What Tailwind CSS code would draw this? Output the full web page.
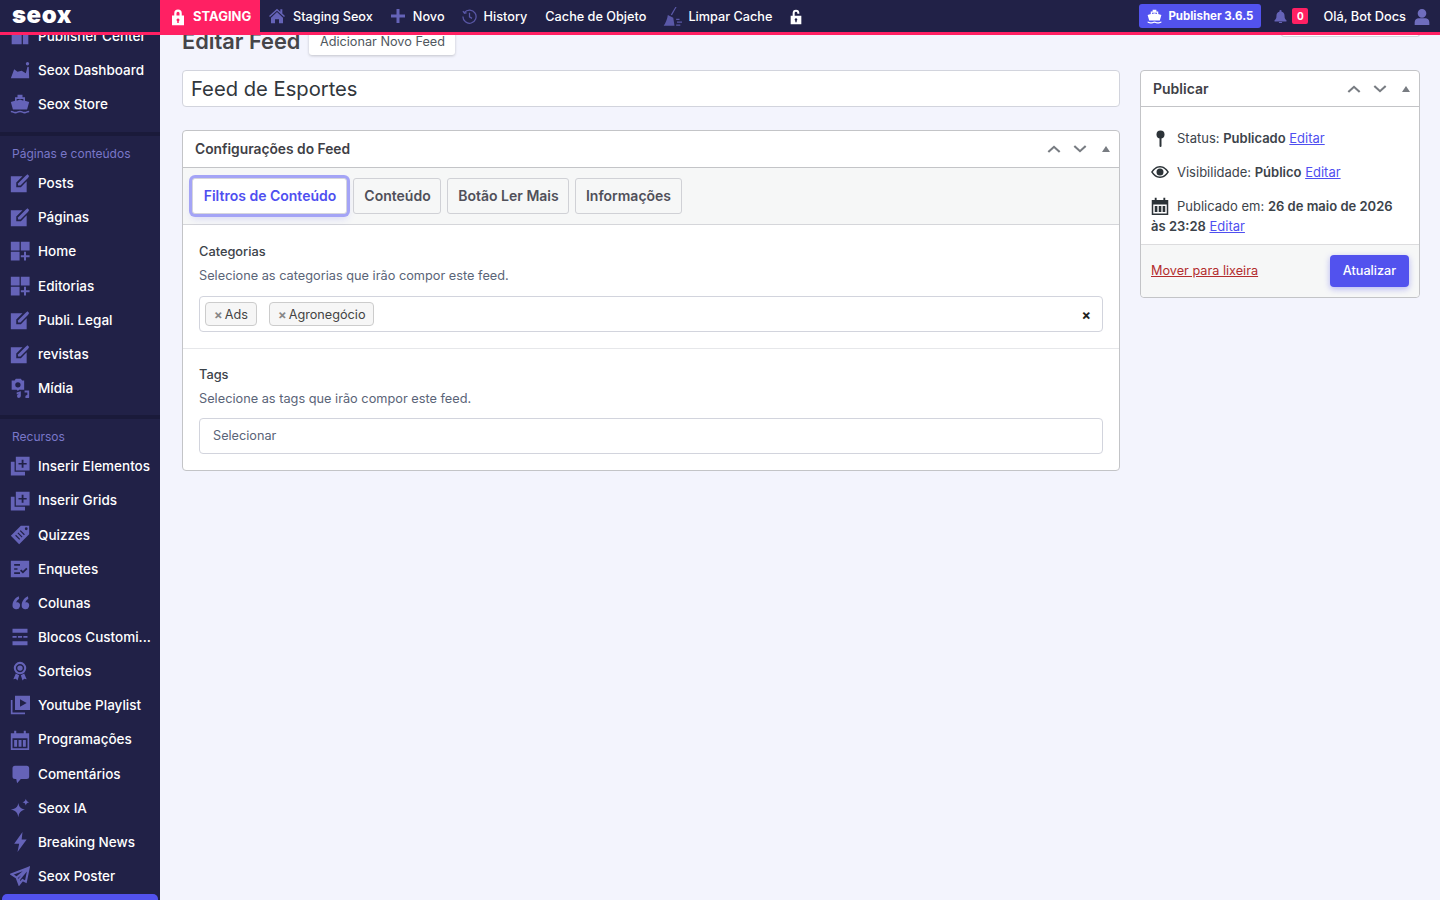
<!DOCTYPE html>
<html lang="pt-BR">
  <head>
    <meta charset="UTF-8" />
    <title>Editar Feed</title>
    <script src="https://cdn.jsdelivr.net/npm/@tailwindcss/browser@4"></script>
  </head>
  <body class="h-[900px] w-[1440px] overflow-hidden bg-[#f3f4fd] font-['Inter',sans-serif] text-[#3c434a]">
    <!-- shared icons -->
    <svg class="hidden">
      <symbol id="i-edit" viewBox="0 0 24 24"><path d="M1 4h14L7.500 11.500V17H13l7-7v13H1z"/><path d="M9.500 12.500 18.500 3.500l2.500-2 2 2-1.500 2.500-9 9H9.500z"/></symbol>
      <symbol id="i-grid" viewBox="0 0 24 24"><path d="M1 1h10.500v10.500H1zM13 1h10.500v10.500H13zM1 13h10.500v10.500H1zM16.800 13h2.400v4H23.500v2.400h-4.300v4.100h-2.400v-4.100H13V17h3.800z"/></symbol>
      <symbol id="i-media" viewBox="0 0 24 24"><path d="M2 3h3.500l1.500-2h6l1.500 2H17v11H11l-1.500 1.500L8 14H2zM9.500 5a3.200 3.200 0 1 0 0 6.400 3.200 3.200 0 0 0 0-6.400z" fill-rule="evenodd"/><path d="M17.500 15H23v7.500a2.300 2.300 0 1 1-2.200-2.200V17.500h-3.300zM8 17.500l5-1.500v5.500a2.300 2.300 0 1 1-2.200-2.200v-.5l-2.800.8z"/></symbol>
      <symbol id="i-insert" viewBox="0 0 24 24"><path d="M1 7h4.500v12H18v4.500H1z"/><path fill-rule="evenodd" d="M7 1h16.500v16.500H7zm7 3.500v3.800h-3.800v2H14V14h2.200v-3.700H20v-2h-3.800V4.500z"/></symbol>
      <symbol id="i-lock" viewBox="0 0 24 24"><path fill-rule="evenodd" d="M7 10V7a5 5 0 0 1 10 0v3h3v13H4V10zm3 0h4V7a2 2 0 0 0-4 0zm2 4a2 2 0 0 0-1 3.700V20h2v-2.300A2 2 0 0 0 12 14z"/></symbol>
      <symbol id="i-ship" viewBox="0 0 24 24"><path d="M9 1h6v3h3v4l5 1.500-2.500 9H3.500L1 9.500 6 8V4h3zM8 6v2l4-1.300L16 8V6z" fill-rule="evenodd"/><path d="M1 20c2.800 0 2.800 1.300 5.500 1.300S9.300 20 12 20s2.800 1.300 5.500 1.300S20.200 20 23 20v2c-2.800 0-2.800 1.300-5.500 1.300S14.800 22 12 22s-2.800 1.300-5.500 1.300S3.800 22 1 22z"/></symbol>
      <symbol id="i-up" viewBox="0 0 16 10"><path d="M1.500 8.500 8 2.500l6.500 6" fill="none" stroke="currentColor" stroke-width="2.400"/></symbol>
      <symbol id="i-down" viewBox="0 0 16 10"><path d="M1.500 1.500 8 7.500l6.500-6" fill="none" stroke="currentColor" stroke-width="2.400"/></symbol>
      <symbol id="i-cal" viewBox="0 0 24 24"><path fill-rule="evenodd" d="M1 4h4V1h2.500v3h9V1H19v3h4v20H1zm2 6v12h18V10zm2 2h3.500v8H5zm5.300 0h3.500v8h-3.500zm5.200 0H19v8h-3.500z"/></symbol>
    </svg>

    <!-- Top bar -->
    <header class="relative z-10 flex h-[35px] items-center border-b-[3px] border-[#ff2063] bg-[#212147] pt-px text-[12.700px] font-medium text-white">
      <div class="-mt-[4px] w-[160px] pl-3 text-[24px] leading-none font-black tracking-[0.5px]">seox</div>
      <div class="-mt-px flex h-[35px] w-[100px] items-center gap-[6px] self-start border-b-[3px] border-[#ff2063] bg-[#ff2063] pt-px pl-[9px] text-[13px] font-bold">
        <svg class="h-[18px] w-[18px] fill-white"><use href="#i-lock" /></svg>
        <span>STAGING</span>
      </div>
      <div class="ml-[9px] flex items-center gap-2">
        <svg class="h-4 w-4 fill-[#6563b8]" viewBox="0 0 24 24"><path d="M12 1 0 12l1.500 1.500L12 4l10.500 9.500L24 12l-4-3.700V2h-3v3.500zM3 14.500 12 6l9 8.500V23h-6v-6H9v6H3z"/></svg>
        <span>Staging Seox</span>
      </div>
      <div class="ml-[18px] flex items-center gap-2">
        <svg class="h-[14px] w-[14px] fill-[#6563b8]" viewBox="0 0 14 14"><path d="M5.500 0h3v5.500H14v3H8.500V14h-3V8.500H0v-3h5.500z"/></svg>
        <span>Novo</span>
      </div>
      <div class="ml-[17px] flex items-center gap-[7px]">
        <svg class="h-[15px] w-[15px] fill-none stroke-[#5a58a8] stroke-[2]" viewBox="0 0 24 24"><path d="M4 5.500A10.500 10.500 0 1 1 1.500 12M1.500 3.500 4 7l3.500-1M12 6v6.500l4 2.500"/></svg>
        <span>History</span>
      </div>
      <span class="ml-[18px]">Cache de Objeto</span>
      <div class="ml-4 flex items-center gap-[6px]">
        <svg class="h-5 w-5 fill-[#5a58a8]" viewBox="0 0 24 24"><path d="M16 0h1.500L12 10l-1.500-.800zM7 9.500l6.500 3.500 1.500 9.500H2c2-3 4.500-8 5-13z"/><path d="M17 14h4v1.500h-4zM18 17.500h6V19h-6zM17 21h5v1.500h-5z"/></svg>
        <span>Limpar Cache</span>
      </div>
      <svg class="ml-[16px] h-[16px] w-[16px] fill-white" viewBox="0 0 24 24"><path fill-rule="evenodd" d="M7 10V6a5 5 0 0 1 10 0v1h-3V6a2 2 0 0 0-4 0v4h10v13H4V10zm5 4a2 2 0 0 0-1 3.700V20h2v-2.300A2 2 0 0 0 12 14z"/></svg>

      <div class="-mt-px ml-auto flex h-6 w-[122px] items-center gap-[6px] rounded-[3px] bg-[#5252ee] pt-px pl-2 text-[11.500px] font-bold">
        <svg class="h-[15px] w-[15px] fill-white"><use href="#i-ship" /></svg>
        <span>Publisher 3.6.5</span>
      </div>
      <svg class="ml-[13px] h-[13px] w-[13px] fill-[#6563b8]" viewBox="0 0 24 24"><path d="M12 0a2 2 0 0 1 2 2v1c4 1 5.500 4 5.500 8 0 4 1 6 3.500 8v2H1v-2c2.500-2 3.500-4 3.500-8 0-4 1.500-7 5.500-8V2a2 2 0 0 1 2-2zM9 22h6a3 3 0 0 1-6 0z"/></svg>
      <span class="-mt-px ml-[5px] flex h-4 w-4 items-center justify-center rounded-[2px] bg-[#ff2063] text-[10px] font-bold">0</span>
      <span class="ml-[15px] text-[12.800px]">Olá, Bot Docs</span>
      <svg class="mr-[10px] ml-[8px] h-[16px] w-[16px] fill-[#6f6dbd]" viewBox="0 0 24 24"><path d="M12 0a6 6 0 0 1 0 13 6 6 0 0 1 0-13zM1 24v-4c0-4 3-6 6-6h10c3 0 6 2 6 6v4z"/></svg>
    </header>

    <div class="flex h-[865px]">
      <!-- Sidebar, scrolled a little -->
      <aside class="w-[160px] shrink-0 overflow-hidden bg-[#212147] text-[13.500px] font-medium text-white">
        <div class="-mt-[16.400px]">
          <a class="flex h-[34.170px] items-center gap-2 pl-[10px]"><svg class="h-5 w-5 fill-[#6563b8]" viewBox="0 0 24 24"><path fill-rule="evenodd" d="M2 2h20v20H2zm12 8v12h1.500V10z"/></svg>Publisher Center</a>
          <a class="flex h-[34.170px] items-center gap-2 pl-[10px]"><svg class="h-5 w-5 fill-[#6563b8]" viewBox="0 0 24 24"><path d="M1 22 5 11l4 3 5-1 5 3 2-8 1.500.5.500 13.500z"/><circle cx="21" cy="4.500" r="2"/></svg>Seox Dashboard</a>
          <a class="flex h-[34.170px] items-center gap-2 pl-[10px]"><svg class="h-5 w-5 fill-[#6563b8]"><use href="#i-ship" /></svg>Seox Store</a>

          <div class="mt-[11px] h-1 bg-[#1a1a3a]"></div>
          <div class="flex h-[30px] items-center pt-[6px] pl-3 text-[12px] font-normal text-[#7977c9]">Páginas e conteúdos</div>
          <a class="flex h-[34.170px] items-center gap-2 pl-[10px]"><svg class="h-5 w-5 fill-[#6563b8]"><use href="#i-edit" /></svg>Posts</a>
          <a class="flex h-[34.170px] items-center gap-2 pl-[10px]"><svg class="h-5 w-5 fill-[#6563b8]"><use href="#i-edit" /></svg>Páginas</a>
          <a class="flex h-[34.170px] items-center gap-2 pl-[10px]"><svg class="h-5 w-5 fill-[#6563b8]"><use href="#i-grid" /></svg>Home</a>
          <a class="flex h-[34.170px] items-center gap-2 pl-[10px]"><svg class="h-5 w-5 fill-[#6563b8]"><use href="#i-grid" /></svg>Editorias</a>
          <a class="flex h-[34.170px] items-center gap-2 pl-[10px]"><svg class="h-5 w-5 fill-[#6563b8]"><use href="#i-edit" /></svg>Publi. Legal</a>
          <a class="flex h-[34.170px] items-center gap-2 pl-[10px]"><svg class="h-5 w-5 fill-[#6563b8]"><use href="#i-edit" /></svg>revistas</a>
          <a class="flex h-[34.170px] items-center gap-2 pl-[10px]"><svg class="h-5 w-5 fill-[#6563b8]"><use href="#i-media" /></svg>Mídia</a>

          <div class="mt-[10.100px] h-1 bg-[#1a1a3a]"></div>
          <div class="flex h-[30px] items-center pt-[6px] pl-3 text-[12px] font-normal text-[#7977c9]">Recursos</div>
          <a class="flex h-[34.170px] items-center gap-2 pl-[10px]"><svg class="h-5 w-5 fill-[#6563b8]"><use href="#i-insert" /></svg>Inserir Elementos</a>
          <a class="flex h-[34.170px] items-center gap-2 pl-[10px]"><svg class="h-5 w-5 fill-[#6563b8]"><use href="#i-insert" /></svg>Inserir Grids</a>
          <a class="flex h-[34.170px] items-center gap-2 pl-[10px]"><svg class="h-5 w-5 fill-[#6563b8]" viewBox="0 0 24 24"><path fill-rule="evenodd" d="M13 1h10v10L11 23 1 13zm6.500 1.800a1.700 1.700 0 1 0 0 3.400 1.700 1.700 0 0 0 0-3.400zM10 9 9 10l5 5 1-1zm-2.800 2.800-1 1 5 5 1-1zM12.800 6.200l-1 1 5 5 1-1z"/></svg>Quizzes</a>
          <a class="flex h-[34.170px] items-center gap-2 pl-[10px]"><svg class="h-5 w-5 fill-[#6563b8]" viewBox="0 0 24 24"><path fill-rule="evenodd" d="M1 2h22v20H1zm4 4v2h7V6zm0 5v2h4v-2zm0 5v2h7v-2zm16-4-1.500-1.500-4 4-2-2L12 14l3.500 3.500z"/></svg>Enquetes</a>
          <a class="flex h-[34.170px] items-center gap-2 pl-[10px]"><svg class="h-5 w-5 fill-[#6563b8]" viewBox="0 0 24 24"><path d="M10.500 4C6 6 3 10 3 15a4.500 4.500 0 1 0 6.500-4c-1 0-1.500 0-2 .3.500-1.800 2-3.300 3.500-4.300zM21.500 4C17 6 14 10 14 15a4.500 4.500 0 1 0 6.500-4c-1 0-1.500 0-2 .3.500-1.800 2-3.300 3.500-4.300z"/></svg>Colunas</a>
          <a class="flex h-[34.170px] items-center gap-2 pl-[10px]"><svg class="h-5 w-5 fill-[#6563b8]" viewBox="0 0 24 24"><path d="M3 2h18v5H3zM3 10.800h5v2H3zM9.500 10.800h5v2h-5zM16 10.800h5v2h-5zM3 17h18v5H3z"/></svg>Blocos Customi...</a>
          <a class="flex h-[34.170px] items-center gap-2 pl-[10px]"><svg class="h-5 w-5 fill-[#6563b8]" viewBox="0 0 24 24"><path fill-rule="evenodd" d="M12 1a7.500 7.500 0 1 1 0 15 7.500 7.500 0 0 1 0-15zm0 2.500a5 5 0 1 0 0 10 5 5 0 0 0 0-10z"/><circle cx="12" cy="8.500" r="3.200"/><path d="M7 15l-3 7 3-.8 2 2.300 2-6.500zM17 15l3 7-3-.8-2 2.300-2-6.500z"/></svg>Sorteios</a>
          <a class="flex h-[34.170px] items-center gap-2 pl-[10px]"><svg class="h-5 w-5 fill-[#6563b8]" viewBox="0 0 24 24"><path fill-rule="evenodd" d="M6 1h18v17H6zm6 4v9l8-4.500z"/><path d="M1 6h2v15h15v2H1z"/></svg>Youtube Playlist</a>
          <a class="flex h-[34.170px] items-center gap-2 pl-[10px]"><svg class="h-5 w-5 fill-[#6563b8]"><use href="#i-cal" /></svg>Programações</a>
          <a class="flex h-[34.170px] items-center gap-2 pl-[10px]"><svg class="h-5 w-5 fill-[#6563b8]" viewBox="0 0 24 24"><path d="M6 2h14a3 3 0 0 1 3 3v10a3 3 0 0 1-3 3h-7l-4.500 5-1-5H6a3 3 0 0 1-3-3V5a3 3 0 0 1 3-3z"/></svg>Comentários</a>
          <a class="flex h-[34.170px] items-center gap-2 pl-[10px]"><svg class="h-5 w-5 fill-[#6563b8]" viewBox="0 0 24 24"><path d="M10 6c1 5 3 7 8 8-5 1-7 3-8 9-1-6-3-8-9-9 6-1 8-3 9-8zM19 1c.5 2.500 1.500 3.500 4 4-2.500.5-3.500 1.500-4 4-.5-2.500-1.500-3.500-4-4 2.500-.5 3.500-1.500 4-4z"/></svg>Seox IA</a>
          <a class="flex h-[34.170px] items-center gap-2 pl-[10px]"><svg class="h-5 w-5 fill-[#6563b8]" viewBox="0 0 24 24"><path d="M15 0 5 14h6l-2 10 11-15h-6z"/></svg>Breaking News</a>
          <a class="flex h-[34.170px] items-center gap-2 pl-[10px]"><svg class="h-5 w-5 fill-none stroke-[#6563b8] stroke-[2.500]" viewBox="0 0 24 24"><path d="M22.500 2 2 10l6 4 3 8 4-5 4 2zM8 14 22.500 2 11 16v6"/></svg>Seox Poster</a>
          <div class="mx-[2px] mt-[1px] h-10 rounded-t-[5px] bg-[#5252ee]"></div>
        </div>
      </aside>

      <!-- Page content -->
      <main class="min-w-0 flex-1 pr-5 pl-[22px]">
        <div class="-mt-[10px] flex h-[30px] items-start">
          <h1 class="self-center pt-[4px] text-[21.800px] leading-none font-semibold text-[#454549]">Editar Feed</h1>
          <a class="ml-[9px] flex h-[30px] w-[146px] items-center justify-center rounded-[3px] bg-white pt-[4px] text-[12.700px] text-[#50575e] shadow-[0_1px_3px_rgba(0,0,0,0.2)]">Adicionar Novo Feed</a>
          <div class="ml-auto h-3 w-[139px] rounded-b-[3px] border border-t-0 border-[#d5d5dd] bg-white"></div>
        </div>

        <div class="mt-[15px] flex items-start gap-5">
          <div class="w-[938px] shrink-0">
            <div class="flex h-[37px] items-center rounded-[4px] border border-[#d2d4dd] bg-white pt-px pl-2 text-[20.200px] text-[#32373c]">Feed de Esportes</div>

            <section class="mt-[23px] rounded-[4px] border border-[#c3c4c7] bg-white">
              <div class="flex h-[37px] items-center justify-between border-b border-[#c3c4c7] pr-[9px] pl-3">
                <h2 class="text-[13.800px] font-semibold text-[#3f3f46]">Configurações do Feed</h2>
                <div class="flex items-center gap-3 text-[#787c82]">
                  <svg class="h-[10px] w-[14px]"><use href="#i-up" /></svg>
                  <svg class="h-[10px] w-[14px]"><use href="#i-down" /></svg>
                  <span class="ml-[3px] h-0 w-0 border-x-[4.500px] border-b-[6px] border-x-transparent border-b-[#787c82]"></span>
                </div>
              </div>
              <div class="flex h-[57px] items-center gap-[6px] border-b border-[#d5d6da] bg-[#f6f7f7] pl-[9px] text-[14px] font-semibold text-[#50505a]">
                <a class="flex h-9 w-[155px] items-center justify-center rounded-[3px] border border-[#d5d5dd] bg-white pb-[2px] pl-px text-[#4f4ff0] shadow-[0_0_0_3px_#a4a4f6,0_4px_8px_rgba(82,82,238,0.2)]">Filtros de Conteúdo</a>
                <a class="flex h-9 w-[88px] items-center justify-center rounded-[3px] border border-[#d0d1d6] pb-[2px] pl-px">Conteúdo</a>
                <a class="flex h-9 w-[122px] items-center justify-center rounded-[3px] border border-[#d0d1d6] pb-[2px] pl-px">Botão Ler Mais</a>
                <a class="flex h-9 w-[107px] items-center justify-center rounded-[3px] border border-[#d0d1d6] pb-[2px]">Informações</a>
              </div>

              <div class="border-b border-[#e6e7ea] px-4 pt-[17px] pb-4">
                <div class="text-[12.800px] leading-[19px] font-medium text-[#3c434a]">Categorias</div>
                <p class="mt-[5px] text-[12.750px] leading-[19px] text-[#5a6478]">Selecione as categorias que irão compor este feed.</p>
                <div class="mt-[11px] flex h-9 items-center rounded-[4px] border border-[#d2d4dd] pr-[11px] pl-[5px] text-[12.700px] text-[#444]">
                  <span class="flex h-6 w-[52px] items-center gap-[2px] rounded-[4px] border border-[#ccc] bg-[#f6f6f6] pt-[2px] pl-[8px]"><span class="font-bold text-[#888]">×</span>Ads</span>
                  <span class="ml-3 flex h-6 w-[105px] items-center gap-[2px] rounded-[4px] border border-[#ccc] bg-[#f6f6f6] pt-[2px] pl-[8px]"><span class="font-bold text-[#888]">×</span>Agronegócio</span>
                  <span class="ml-auto text-[14px] font-bold text-[#222]">×</span>
                </div>
              </div>

              <div class="px-4 pt-4 pb-4">
                <div class="text-[12.800px] leading-[19px] font-medium text-[#3c434a]">Tags</div>
                <p class="mt-[5px] text-[12.750px] leading-[19px] text-[#5a6478]">Selecione as tags que irão compor este feed.</p>
                <div class="mt-[10px] flex h-9 items-center rounded-[4px] border border-[#d2d4dd] pl-[13px] text-[12.700px] text-[#5a6478]">Selecionar</div>
              </div>
            </section>
          </div>

          <!-- Publish box -->
          <aside class="w-[280px] shrink-0 rounded-[4px] border border-[#c3c4c7] bg-white text-[13px]">
            <div class="flex h-9 items-center justify-between border-b border-[#c3c4c7] pr-[9px] pl-3">
              <h2 class="text-[14px] font-semibold text-[#3f3f46]">Publicar</h2>
              <div class="flex items-center gap-3 text-[#787c82]">
                <svg class="h-[10px] w-[14px]"><use href="#i-up" /></svg>
                <svg class="h-[10px] w-[14px]"><use href="#i-down" /></svg>
                <span class="ml-[3px] h-0 w-0 border-x-[4.500px] border-b-[6px] border-x-transparent border-b-[#787c82]"></span>
              </div>
            </div>
            <div class="px-[10px] pt-[14px] pb-2 leading-5">
              <div class="flex h-[34px] items-center">
                <svg class="mr-[10px] ml-[3px] h-[17px] w-[13px] fill-[#2c3338]" viewBox="0 0 13 17"><circle cx="6.500" cy="4.500" r="4"/><rect x="5.500" y="6" width="2" height="11" rx="1"/></svg>
                <span>Status: <b class="font-semibold">Publicado</b> <a class="text-[#4f4ff0] underline">Editar</a></span>
              </div>
              <div class="flex h-[34px] items-center">
                <svg class="mr-2 h-[14px] w-[18px] fill-[#2c3338]" viewBox="0 0 18 14"><path fill-rule="evenodd" d="M9 1c4 0 7 3 9 6-2 3-5 6-9 6S2 10 0 7c2-3 5-6 9-6zm0 1.500C6 2.500 3.500 4.500 1.800 7 3.500 9.500 6 11.500 9 11.500S14.500 9.500 16.200 7C14.500 4.500 12 2.500 9 2.500zM9 3.500a3.500 3.500 0 1 1 0 7 3.500 3.500 0 0 1 0-7z"/></svg>
                <span>Visibilidade: <b class="font-semibold">Público</b> <a class="text-[#4f4ff0] underline">Editar</a></span>
              </div>
              <p class="mt-[7px]">
                <svg class="mr-[8px] inline-block h-[18px] w-[18px] fill-[#2c3338] align-[-4px]"><use href="#i-cal" /></svg>Publicado em: <b class="font-semibold">26 de maio de 2026 às 23:28</b> <a class="text-[#4f4ff0] underline">Editar</a>
              </p>
            </div>
            <div class="flex h-[53px] items-center justify-between rounded-b-[4px] border-t border-[#dcdcde] bg-[#f6f7f7] pr-[10px] pl-[10px] text-[12.700px]">
              <a class="text-[#b32d2e] underline">Mover para lixeira</a>
              <a class="flex h-8 w-[79px] items-center justify-center rounded-[4px] bg-[#5252ee] font-medium text-white shadow-[0_2px_6px_rgba(82,82,238,0.4)]">Atualizar</a>
            </div>
          </aside>
        </div>
      </main>
    </div>
  </body>
</html>
